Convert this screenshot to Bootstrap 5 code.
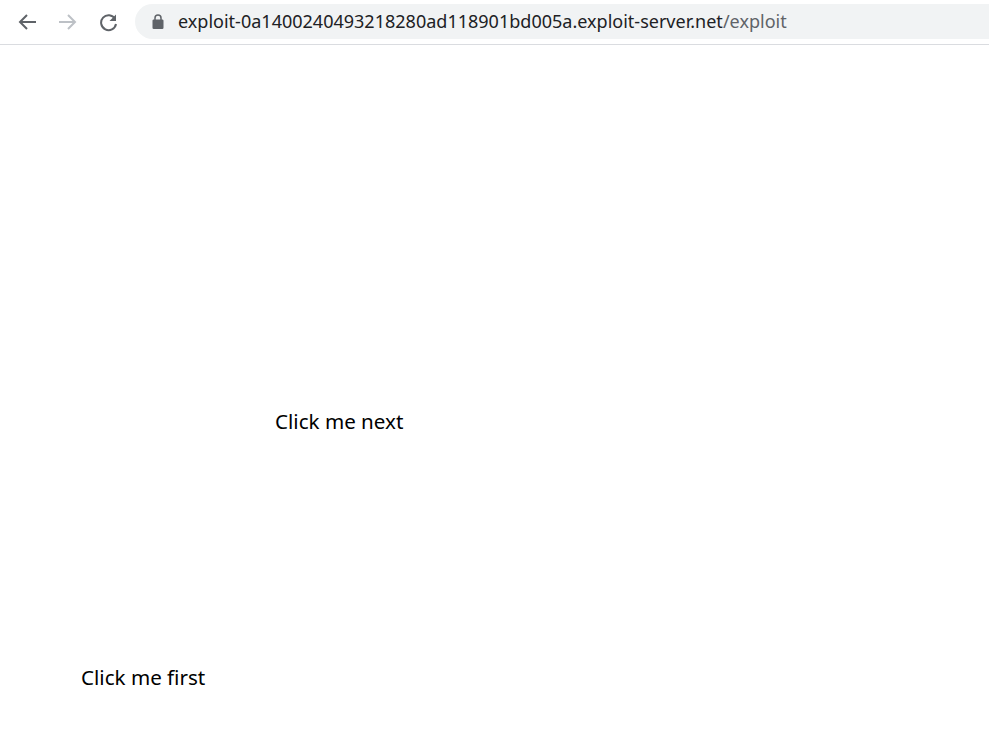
<!DOCTYPE html>
<html lang="en">
<head>
    <meta charset="UTF-8">
    <meta name="viewport" content="width=device-width, initial-scale=1.0">
    <title>Exploit</title>
    <link href="https://cdn.jsdelivr.net/npm/bootstrap@5.3.0/dist/css/bootstrap.min.css" rel="stylesheet">
    <style>
        html, body { height: 100%; }
        body {
            background: #fff;
            overflow: hidden;
            font-family: "Noto Sans", "Open Sans", sans-serif;
        }
        .browser-bar {
            height: 45px;
            border-bottom: 1px solid #dadce0;
            padding: 4px 0 5px 7px;
        }
        .nav-btn {
            width: 40px;
            height: 35px;
            flex: none;
        }
        .url-pill {
            height: 35px;
            margin-left: 8px;
            padding-left: 17px;
            background: #f1f3f4;
            border-radius: 18px 0 0 18px;
            font-size: 18.03px;
            color: #202124;
            white-space: nowrap;
        }
        .url-pill svg { margin-right: 14px; flex: none; }
        .url-path { color: #5f6368; }
        .click-text {
            font-size: 20.6px;
            line-height: 28px;
            color: #000;
            white-space: nowrap;
        }
        .click-next { padding: 362px 0 0 275px; }
        .click-first { padding: 228px 0 0 81px; }
    </style>
</head>
<body>
<div class="browser-bar d-flex align-items-center">
    <div class="nav-btn d-flex align-items-center justify-content-center">
        <svg width="20" height="20" viewBox="0 0 20 20" fill="none" stroke="#5f6368" stroke-width="2"><path d="M19 10H3M10 3l-7 7 7 7"/></svg>
    </div>
    <div class="nav-btn d-flex align-items-center justify-content-center">
        <svg width="20" height="20" viewBox="0 0 20 20" fill="none" stroke="#bdc1c6" stroke-width="2"><path d="M2 10h16M11 3l7 7-7 7"/></svg>
    </div>
    <div class="nav-btn d-flex align-items-center justify-content-center">
        <svg width="20" height="20" viewBox="0 0 20 20" fill="none"><path d="M17 6.700A7.500 7.500 0 1 0 18 12" stroke="#5f6368" stroke-width="2" transform="translate(1 0)"/><path d="M19 2.500V9h-6.500z" fill="#5f6368"/></svg>
    </div>
    <div class="url-pill flex-grow-1 d-flex align-items-center">
        <svg width="12" height="15" viewBox="0 0 12 15"><path d="M1.500 5.500h9A1.300 1.300 0 0 1 11.500 7v6.500A1.300 1.300 0 0 1 10.500 15h-9A1.300 1.300 0 0 1 .5 13.500V7a1.300 1.300 0 0 1 1-1.500z" fill="#5f6368"/><path d="M3 6V4a3 3 0 0 1 6 0v2" fill="none" stroke="#5f6368" stroke-width="1.500"/></svg>
        <span>exploit-0a1400240493218280ad118901bd005a.exploit-server.net<span class="url-path">/exploit</span></span>
    </div>
</div>
<div class="click-text click-next">Click me next</div>
<div class="click-text click-first">Click me first</div>
<script src="https://cdn.jsdelivr.net/npm/bootstrap@5.3.0/dist/js/bootstrap.bundle.min.js"></script>
</body>
</html>
